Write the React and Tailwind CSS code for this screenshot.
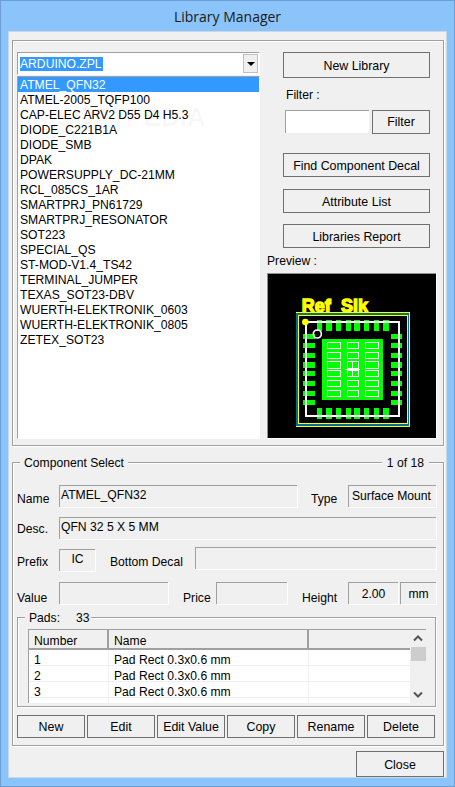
import React from "react";

const items = [
  "ATMEL_QFN32", "ATMEL-2005_TQFP100", "CAP-ELEC ARV2 D55 D4 H5.3", "DIODE_C221B1A", "DIODE_SMB", "DPAK",
  "POWERSUPPLY_DC-21MM", "RCL_085CS_1AR", "SMARTPRJ_PN61729", "SMARTPRJ_RESONATOR", "SOT223", "SPECIAL_QS",
  "ST-MOD-V1.4_TS42", "TERMINAL_JUMPER", "TEXAS_SOT23-DBV", "WUERTH-ELEKTRONIK_0603", "WUERTH-ELEKTRONIK_0805", "ZETEX_SOT23",
];

// Pad positions are in 3x picture units, the svg viewBox scales them down
const topPads = [[171, 16], [198, 18], [228, 16], [258, 16], [282, 18], [312, 16], [342, 16], [369, 18]];
const sidePads = [[222, 15], [249, 15], [279, 15], [306, 18], [333, 15], [363, 15], [393, 15], [420, 15]];
const cols = [[202, 38], [262, 32], [316, 38]];
const rows = [[246, 19], [276, 18], [304, 20], [331, 19], [361, 19], [390, 18]];

const Btn = ({ className = "", children }) => (
  <button className={`flex items-center justify-center border border-[#707070] bg-[#f0f0f0] text-[12.4px] text-black ${className}`}>
    {children}
  </button>
);

const Field = ({ className = "", children }) => (
  <div className={`border-t border-l border-t-[#a0a0a0] border-l-[#a0a0a0] shadow-[1px_1px_0_#fff] h-[22px] px-[1px] leading-[14px] whitespace-nowrap ${className}`}>
    {children}
  </div>
);

const PcbPreview = () => (
  <svg viewBox="24 42 504 492" width="168" height="164" className="block" shapeRendering="crispEdges">
    <rect x="24" y="42" width="504" height="492" fill="#000" />
    <text x="125" y="157" fill="#ffff00" stroke="#ffff00" strokeWidth="4" fontSize="54" fontWeight="700" fontFamily="Liberation Sans, sans-serif">
      Ref <tspan x="243">Slk</tspan>
    </text>
    <rect x="108" y="158" width="341" height="340" fill="none" stroke="#ffff00" strokeWidth="3" />
    <rect x="112" y="162" width="333" height="332" fill="none" stroke="#007090" strokeWidth="6" />
    <rect x="115" y="165" width="326" height="325" fill="none" stroke="#ffff00" strokeWidth="3" />
    {topPads.map(([x, w]) => (
      <g key={x}>
        <rect x={x} y="180" width={w} height="32" fill="#00ff00" />
        <rect x={x} y="444" width={w} height="32" fill="#00ff00" />
      </g>
    ))}
    {sidePads.map(([y, h]) => (
      <g key={y}>
        <rect x="129" y={y} width="36" height={h} fill="#00ff00" />
        <rect x="393" y={y} width="33" height={h} fill="#00ff00" />
      </g>
    ))}
    <rect x="187" y="237" width="182" height="182" fill="#00ff00" />
    <rect x="137" y="186" width="280" height="281" fill="none" stroke="#fff" strokeWidth="6" />
    {rows.map(([y, h]) =>
      cols.map(([x, w]) => (
        <rect key={`${x}-${y}`} x={x} y={y} width={w} height={h} fill="none" stroke="#fff" strokeWidth="3" />
      ))
    )}
    <path d="M256 328H300M278 305V350" stroke="#fff" strokeWidth="3" fill="none" />
    <circle cx="136" cy="186" r="10" fill="#ffff00" shapeRendering="auto" />
    <circle cx="172" cy="222" r="12" fill="none" stroke="#fff" strokeWidth="5" shapeRendering="auto" />
  </svg>
);

const ScrollBar = () => (
  <div className="w-[16px] h-full bg-[#f0f0f0] flex flex-col items-center">
    <svg viewBox="0 0 16 16" width="16" height="17" className="shrink-0">
      <path d="M4 10L8 6L12 10" fill="none" stroke="#555" strokeWidth="2" />
    </svg>
    <div className="w-[15px] h-[17px] bg-[#cdcdcd]" />
    <div className="h-[31px]" />
    <svg viewBox="0 0 16 16" width="16" height="17" className="shrink-0">
      <path d="M4 6L8 10L12 6" fill="none" stroke="#555" strokeWidth="2" />
    </svg>
  </div>
);

const PadsTable = () => (
  <div className="ml-[10px] mt-[11px] w-[398px] h-[74px] flex border-t border-l border-[#a0a0a0] bg-white overflow-hidden">
    <div className="w-[381px]">
      <div className="flex h-[20px] bg-[#f0f0f0] border-b-2 border-b-[#a0a0a0] leading-[23px]">
        <div className="w-[80px] pl-[5px] border-r-2 border-r-[#a0a0a0]">Number</div>
        <div className="w-[200px] pl-[5px] border-r-2 border-r-[#a0a0a0]">Name</div>
      </div>
      {["1", "2", "3", ""].map((n, i) => (
        <div key={i} className="flex h-[16px] border-b border-b-[#f0f0f0] leading-[20px]">
          <div className="w-[80px] pl-[5px] border-r border-r-[#f0f0f0]">{n}</div>
          <div className="w-[200px] pl-[5px] border-r border-r-[#f0f0f0]">{n && "Pad Rect 0.3x0.6 mm"}</div>
        </div>
      ))}
    </div>
    <ScrollBar />
  </div>
);

export default function App() {
  return (
    <div className="w-[455px] h-[787px] overflow-hidden bg-[#8ac4fa] border border-[#6b9fd4] flex flex-col font-['Liberation_Sans',sans-serif] text-[12.15px] text-black">
      <div className="h-[30px] flex items-center justify-center text-[14px] text-[#1a1a1a] font-['Open_Sans',sans-serif]">
        Library Manager
      </div>
      <div className="mx-[7px] h-[747px] bg-[#f0f0f0] border border-[#c8d8e8] pl-[3px] pt-[8px]">
        {/* Library group */}
        <div className="w-[432px] h-[406px] border border-[#a0a0a0] shadow-[1px_1px_0_#fff,inset_1px_1px_0_#fff] flex pl-[4px] pt-[11px]">
          <div className="w-[243px]">
            <div className="h-[23px] border border-[#a0a0a0] border-r-white border-b-white bg-white flex items-center pl-[2px]">
              <span className="bg-[#3399ff] text-white h-[14px] leading-[14px] pr-[1px]">ARDUINO.ZPL</span>
              <div className="ml-auto mr-[1px] w-[15px] h-[19px] bg-[#f0f0f0] border border-[#c0c0c0] flex items-center justify-center">
                <div className="w-0 h-0 border-x-[4px] border-x-transparent border-t-[4px] border-t-black" />
              </div>
            </div>
            <div className="relative mt-[1px] h-[363px] border border-[#a0a0a0] border-r-white border-b-white bg-white overflow-hidden">
              <div className="absolute left-[39px] top-[21px] text-[26px] font-bold text-black/[0.03] whitespace-nowrap">
                SOFTPEDIA<span className="text-[10px] align-top">®</span>
              </div>
              {items.map((it, i) => (
                <div key={it} className={`relative h-[15px] leading-[17px] pl-[2px] whitespace-nowrap ${i === 0 ? "bg-[#3399ff] text-white" : ""}`}>
                  {it}
                </div>
              ))}
            </div>
          </div>
          <div className="w-[169px] ml-[7px]">
            <Btn className="ml-[16px] w-[147px] h-[26px] pt-[2px]">New Library</Btn>
            <div className="ml-[19px] mt-[10px] h-[15px] leading-[15px]">Filter :</div>
            <div className="flex mt-[7px] ml-[18px]">
              <div className="w-[84px] h-[23px] bg-white border-t border-l border-t-[#a0a0a0] border-l-[#a0a0a0]" />
              <Btn className="ml-[3px] w-[58px] h-[24px]">Filter</Btn>
            </div>
            <Btn className="ml-[16px] mt-[19px] w-[147px] h-[24px] pt-[2px]">Find Component Decal</Btn>
            <Btn className="ml-[16px] mt-[12px] w-[147px] h-[24px] pt-[2px]">Attribute List</Btn>
            <Btn className="ml-[16px] mt-[11px] w-[147px] h-[24px] pt-[2px]">Libraries Report</Btn>
            <div className="mt-[6px] h-[15px] leading-[15px]">Preview :</div>
            <div className="mt-[4px] w-[169px] h-[165px] border-t border-l border-[#909090] shadow-[1px_1px_0_#fff]">
              <PcbPreview />
            </div>
          </div>
        </div>

        {/* Component Select group */}
        <div className="relative mt-[16px] w-[432px] h-[284px] border border-[#a0a0a0] shadow-[1px_1px_0_#fff,inset_1px_1px_0_#fff] pl-[4px] pt-[22px]">
          <div className="absolute left-[7px] top-[-7px] bg-[#f0f0f0] px-[4px] leading-[15px]">Component Select</div>
          <div className="absolute right-[14px] top-[-7px] bg-[#f0f0f0] px-[5px] leading-[15px]">1 of 18</div>

          <div className="flex items-start h-[22px]">
            <div className="w-[42px] pt-[5px]">Name</div>
            <Field className="w-[238px] pt-[2px]">ATMEL_QFN32</Field>
            <div className="ml-[14px] w-[37px] pt-[5px]">Type</div>
            <Field className="w-[88px] pl-[3px] pt-[3px]">Surface Mount</Field>
          </div>
          <div className="flex items-start h-[22px] mt-[10px]">
            <div className="w-[42px] pt-[3px]">Desc.</div>
            <Field className="w-[377px] pt-[2px]">QFN 32 5 X 5 MM</Field>
          </div>
          <div className="flex items-start h-[22px] mt-[8px]">
            <div className="w-[42px] pt-[6px]">Prefix</div>
            <Field className="w-[36px] mt-[2px] pt-[2px] text-center">IC</Field>
            <div className="ml-[15px] w-[85px] pt-[6px]">Bottom Decal</div>
            <Field className="w-[241px]" />
          </div>
          <div className="flex items-start h-[22px] mt-[13px]">
            <div className="w-[42px] pt-[7px]">Value</div>
            <Field className="w-[109px]" />
            <div className="ml-[15px] w-[33px] pt-[7px]">Price</div>
            <Field className="w-[71px]" />
            <div className="ml-[15px] w-[46px] pt-[7px]">Height</div>
            <Field className="w-[50px] pt-[4px] text-center">2.00</Field>
            <Field className="w-[36px] ml-[2px] pt-[4px] text-center">mm</Field>
          </div>

          {/* Pads group */}
          <div className="relative mt-[13px] w-[419px] h-[90px] border border-[#a0a0a0] shadow-[1px_1px_0_#fff,inset_1px_1px_0_#fff]">
            <div className="absolute left-[7px] top-[-7px] bg-[#f0f0f0] pl-[4px] pr-[1px] leading-[15px] whitespace-nowrap">
              Pads:<span className="ml-[16px]">33</span>
            </div>
            <PadsTable />
          </div>

          <div className="flex gap-[2px] mt-[8px]">
            {["New", "Edit", "Edit Value", "Copy", "Rename", "Delete"].map((b) => (
              <Btn key={b} className="w-[68px] h-[23px] pt-[1px]">{b}</Btn>
            ))}
          </div>
        </div>

        <div className="flex justify-end mt-[5px] pr-[2px]">
          <Btn className="w-[88px] h-[26px] pt-[3px]">Close</Btn>
        </div>
      </div>
    </div>
  );
}
